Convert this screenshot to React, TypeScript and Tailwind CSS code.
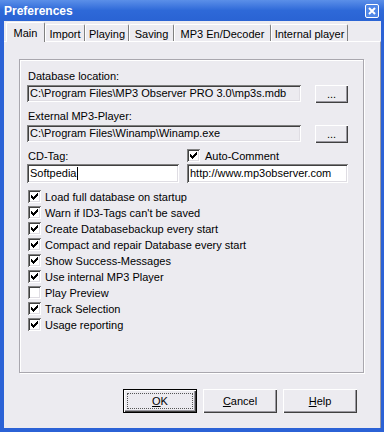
import React from 'react';

const sunken = "shadow-[inset_1px_1px_0_#808080,inset_-1px_-1px_0_#ffffff,inset_2px_2px_0_#404040,inset_-2px_-2px_0_#dfdde3]";
const raised = "shadow-[inset_1px_1px_0_#ffffff,inset_-1px_-1px_0_#404040,inset_-2px_-2px_0_#9a98a0]";

const tabs = [
    { label: 'Main', w: 'w-[39px]', active: true },
    { label: 'Import', w: 'w-[40px]' },
    { label: 'Playing', w: 'w-[44px]' },
    { label: 'Saving', w: 'w-[45px]' },
    { label: 'MP3 En/Decoder', w: 'w-[97px]' },
    { label: 'Internal player', w: 'w-[77px]' },
];

const options = [
    { label: 'Load full database on startup', checked: true },
    { label: "Warn if ID3-Tags can't be saved", checked: true },
    { label: 'Create Databasebackup every start', checked: true },
    { label: 'Compact and repair Database every start', checked: true },
    { label: 'Show Success-Messages', checked: true },
    { label: 'Use internal MP3 Player', checked: true },
    { label: 'Play Preview', checked: false },
    { label: 'Track Selection', checked: true },
    { label: 'Usage reporting', checked: true },
];

// classic 7x7 check mark, drawn pixel by pixel
const checkPixels = [
    [6, 0], [5, 1], [6, 1], [0, 2], [4, 2], [5, 2], [6, 2],
    [0, 3], [1, 3], [3, 3], [4, 3], [5, 3],
    [0, 4], [1, 4], [2, 4], [3, 4], [4, 4],
    [1, 5], [2, 5], [3, 5], [2, 6],
];

const CheckBox = ({ checked }: { checked: boolean }) => (
    <div className={`w-[13px] h-[13px] shrink-0 bg-white flex items-center justify-center ${sunken}`}>
        {checked && (
            <svg width="7" height="7" viewBox="0 0 7 7" shapeRendering="crispEdges">
                {checkPixels.map(([x, y]) => (
                    <rect key={`${x}-${y}`} x={x} y={y} width="1" height="1" fill="#000" />
                ))}
            </svg>
        )}
    </div>
);

const PathField = ({ value }: { value: string }) => (
    <div className="flex items-start">
        <div className={`w-[274px] h-[17px] pl-[3px] flex items-center bg-[#ecebf0] whitespace-nowrap overflow-hidden ${sunken}`}>
            {value}
        </div>
        <div className={`ml-[14px] w-[33px] h-[18px] flex items-center justify-center bg-[#ecebf0] ${raised}`}>
            ...
        </div>
    </div>
);

const DialogButton = ({ first, rest, isDefault }: { first: string; rest: string; isDefault?: boolean }) => (
    <div className={`w-[74px] h-[24px] flex items-center justify-center ${isDefault ? 'border border-black' : ''}`}>
        <div className={`relative w-full h-full flex items-center justify-center bg-[#ecebf0] ${raised}`}>
            {isDefault && <div className="absolute inset-[3px] border border-dotted border-[#555]" />}
            <span className="pt-[1px]"><span className="underline">{first}</span>{rest}</span>
        </div>
    </div>
);

export default function App() {
    return (
        <div className="w-[384px] h-[432px] flex flex-col bg-[#2b62d6] font-['Liberation_Sans',Arial,sans-serif] text-[11px] leading-[13px] text-black">
            {/* title bar */}
            <div className="h-[21px] shrink-0 flex items-center justify-between pl-[4px] pr-[5px] bg-linear-to-b from-[#5b8fe8] via-[#2e69d8] to-[#2a63d3]">
                <span className="text-white font-bold text-[12px] leading-[14px] pt-[1px]">Preferences</span>
                <div className="w-[14px] h-[14px] rounded-[2px] border border-white bg-[#4f86e6] flex items-center justify-center">
                    <svg width="8" height="8" viewBox="0 0 8 8">
                        <path d="M1 1 L7 7 M7 1 L1 7" stroke="#fff" strokeWidth="2" />
                    </svg>
                </div>
            </div>

            {/* client area */}
            <div className="flex-1 ml-[4px] mr-[3px] mb-[4px] bg-[#ecebf0] flex flex-col">
                <div className="h-[20px] shrink-0 flex items-end pl-[2px]">
                    {tabs.map((t) =>
                        t.active ? (
                            <div key={t.label} className={`${t.w} h-[20px] -mb-[1px] relative z-10 bg-[#ecebf0] border-t border-l border-white border-r border-r-[#808080] rounded-t-[2px] flex justify-center pt-[4px]`}>
                                {t.label}
                            </div>
                        ) : (
                            <div key={t.label} className={`${t.w} h-[17px] bg-[#ecebf0] border-t border-l border-white border-r border-r-[#808080] rounded-t-[2px] flex justify-center pt-[3px] whitespace-nowrap`}>
                                {t.label}
                            </div>
                        )
                    )}
                </div>

                <div className="flex-1 border-t border-white border-r border-r-[#9c9aa2] flex flex-col">
                    {/* group box */}
                    <div className="ml-[15px] mt-[17px] w-[345px] h-[314px] border border-[#a9a7ae] shadow-[inset_1px_1px_0_#fff,1px_1px_0_#fff] pl-[7px] pt-[10px] flex flex-col">
                        <div className="pl-[1px]">Database location:</div>
                        <div className="mt-[2px]">
                            <PathField value={"C:\\Program Files\\MP3 Observer PRO 3.0\\mp3s.mdb"} />
                        </div>
                        <div className="pl-[1px] mt-[7px]">External MP3-Player:</div>
                        <div className="mt-[2px]">
                            <PathField value={"C:\\Program Files\\Winamp\\Winamp.exe"} />
                        </div>

                        <div className="mt-[5px] h-[14px] flex items-center">
                            <div className="w-[160px] pl-[1px] pt-[2px]">CD-Tag:</div>
                            <div className="flex items-center gap-[5px]">
                                <CheckBox checked />
                                <span className="pt-[2px]">Auto-Comment</span>
                            </div>
                        </div>

                        <div className="mt-[2px] flex gap-[8px]">
                            <div className={`w-[152px] h-[19px] pl-[3px] flex items-center bg-white ${sunken}`}>
                                Softpedia<span className="ml-[1px] w-[1px] h-[13px] bg-black" />
                            </div>
                            <div className={`w-[161px] h-[19px] pl-[3px] flex items-center bg-white whitespace-nowrap ${sunken}`}>
                                http://www.mp3observer.com
                            </div>
                        </div>

                        <div className="mt-[7px] flex flex-col">
                            {options.map((o) => (
                                <div key={o.label} className="h-[16px] flex items-start pl-[1px]">
                                    <CheckBox checked={o.checked} />
                                    <span className="ml-[4px] pt-[1px] whitespace-nowrap">{o.label}</span>
                                </div>
                            ))}
                        </div>
                    </div>

                    {/* dialog buttons */}
                    <div className="ml-[119px] mt-[16px] flex gap-[6px]">
                        <DialogButton first="O" rest="K" isDefault />
                        <DialogButton first="C" rest="ancel" />
                        <DialogButton first="H" rest="elp" />
                    </div>
                </div>
            </div>
        </div>
    );
}
